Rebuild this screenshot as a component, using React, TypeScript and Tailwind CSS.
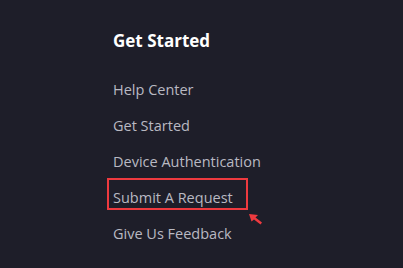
import React from 'react';

const links = ['Help Center', 'Get Started', 'Device Authentication', 'Submit A Request', 'Give Us Feedback'];

export default function App() {
  return (
    <div className="w-[403px] h-[268px] bg-[#1e1e29] pl-[113px] pt-[29px]" style={{ fontFamily: '"Open Sans", sans-serif' }}>
      <h2 className="text-[17px] font-bold text-white leading-[24px]">Get Started</h2>
      <ul className="mt-[25px] flex flex-col gap-[12px]">
        {links.map((l, i) => (
          <li key={i} className="relative text-[14.5px] leading-[24px] text-[#b9b9c2]">
            {l}
            {i === 3 && (
              <>
                <div className="absolute left-[-6px] top-[-8px] w-[141px] h-[32px] border-2 border-[#ee3a3f]"></div>
                <svg className="absolute left-[136px] top-[28px]" width="14" height="11" viewBox="0 0 14 11">
                  <path d="M0 0 L9 1 L6.5 3.5 L13 8.5 L11.5 10.5 L5 5.5 L2.5 7.5 Z" fill="#ee3a3f" />
                </svg>
              </>
            )}
          </li>
        ))}
      </ul>
    </div>
  );
}
